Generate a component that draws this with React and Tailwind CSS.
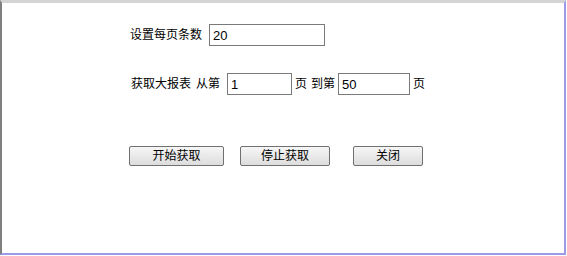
import React from 'react';

const font = "font-['Liberation_Sans','Noto_Sans_CJK_SC',sans-serif]";

const Field = ({ value, width }) => (
    <input
        readOnly
        value={value}
        className={`${width} h-[22px] border border-[#7a7a7a] bg-white px-[3px] text-[13px] text-black outline-none ${font}`}
    />
);

const Btn = ({ label, width }) => (
    <button
        className={`${width} h-[20px] rounded-[2px] border border-[#707070] bg-gradient-to-b from-[#f6f6f6] to-[#dddddd] text-[12px] leading-none text-black ${font}`}
    >
        {label}
    </button>
);

const App = () => (
    <div className="w-[567px] h-[256px] bg-white">
        <div className={`w-[566px] h-[255px] border-t-[3px] border-t-[#d4d4d4] border-l-2 border-l-[#7f7f7f] border-r-2 border-r-[#9a9ae8] border-b-2 border-b-[#9a9ae8] text-[12px] text-black ${font}`}>
            <div className="flex items-center pl-[128px] mt-[21px]">
                <span>设置每页条数</span>
                <span className="ml-[7px]"><Field value="20" width="w-[116px]" /></span>
            </div>
            <div className="flex items-center pl-[129px] mt-[27px]">
                <span>获取大报表</span>
                <span className="ml-[5px]">从第</span>
                <span className="ml-[7px]"><Field value="1" width="w-[65px]" /></span>
                <span className="ml-[3px]">页</span>
                <span className="ml-[4px]">到第</span>
                <span className="ml-[3px]"><Field value="50" width="w-[72px]" /></span>
                <span className="ml-[3px]">页</span>
            </div>
            <div className="flex items-center pl-[127px] mt-[51px]">
                <Btn label="开始获取" width="w-[95px]" />
                <span className="ml-[16px]"><Btn label="停止获取" width="w-[90px]" /></span>
                <span className="ml-[23px]"><Btn label="关闭" width="w-[70px]" /></span>
            </div>
        </div>
    </div>
);

export default App;
